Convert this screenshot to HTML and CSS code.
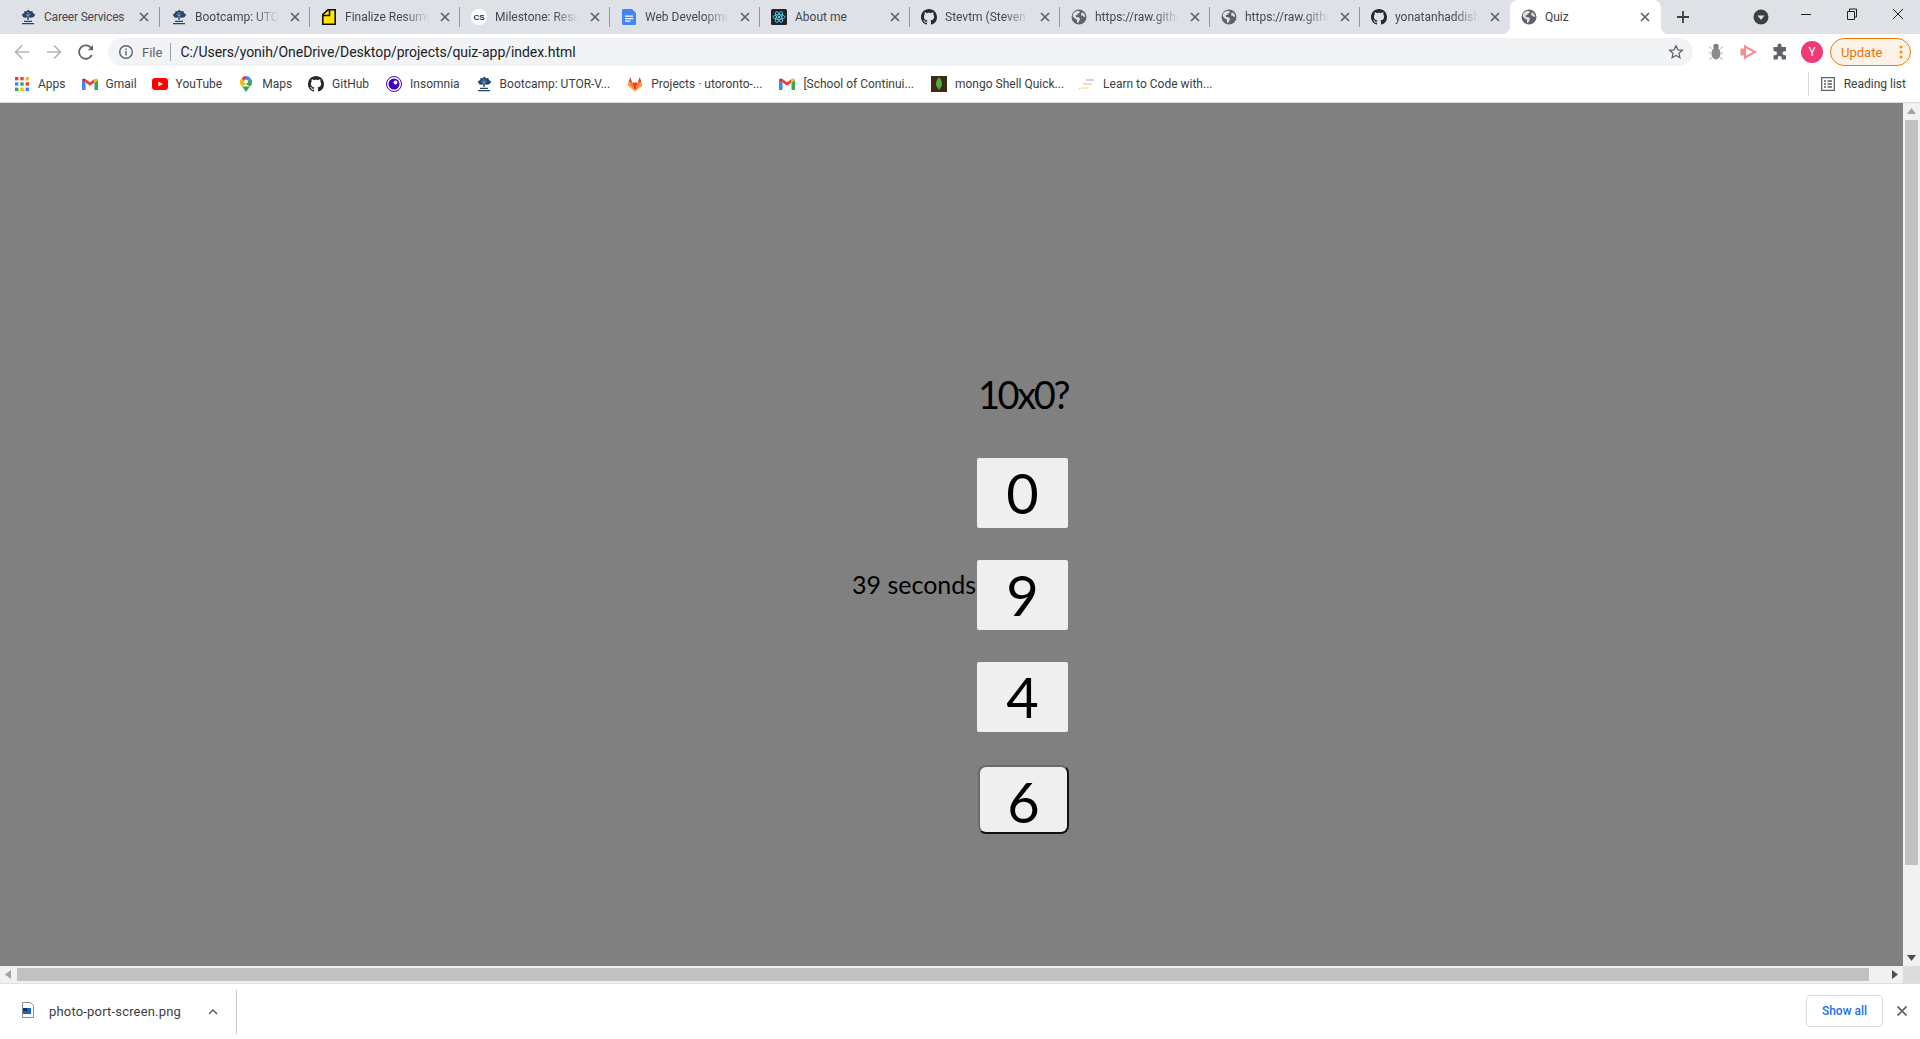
FILE: index.html
```html
<!DOCTYPE html>
<html lang="en">
<head>
<meta charset="utf-8">
<title>Quiz</title>
<link rel="stylesheet" href="styles.css">
</head>
<body>
<svg class="defs" width="0" height="0" aria-hidden="true">
  <symbol id="i-tree" viewBox="0 0 16 16"><path fill="#24466f" d="M8 .5l2.200 1.700 2.200-.2.500 2 2.300 1.500-1 2-1.800 1.100-2.400.1-1.200-.7v2.700h-1.600V8l-1.200.7-2.400-.1L2.800 7.500l-1-2L4.100 4l.5-2 2.200.2z"/><path fill="#24466f" d="M4 11.800h8V13H4zM2 14h12v1.300H2z"/><path fill="none" stroke="#a9b9cc" stroke-width=".7" d="M8 3v5M5.500 5L8 7l2.500-2"/></symbol>
  <symbol id="i-github" viewBox="0 0 16 16"><path fill="#24292e" d="M8 0C3.580 0 0 3.580 0 8c0 3.540 2.290 6.530 5.470 7.590.4.070.55-.17.55-.38 0-.19-.01-.82-.01-1.490-2.010.37-2.530-.49-2.690-.94-.09-.23-.48-.94-.82-1.130-.28-.15-.68-.52-.01-.53.63-.01 1.080.58 1.230.82.72 1.210 1.870.87 2.330.66.07-.52.28-.87.51-1.070-1.780-.2-3.640-.89-3.640-3.950 0-.87.31-1.590.82-2.150-.08-.2-.36-1.020.08-2.120 0 0 .67-.21 2.200.82.64-.18 1.320-.27 2-.27.68 0 1.360.09 2 .27 1.530-1.040 2.200-.82 2.200-.82.44 1.100.16 1.920.08 2.120.51.56.82 1.270.82 2.150 0 3.070-1.870 3.750-3.650 3.950.29.25.54.73.54 1.480 0 1.070-.01 1.930-.01 2.200 0 .21.15.46.55.38A8.013 8.013 0 0016 8c0-4.420-3.580-8-8-8z"/></symbol>
  <symbol id="i-globe" viewBox="0 0 16 16"><circle cx="8" cy="8" r="7.500" fill="#5f6368"/><path fill="#dee1e6" d="M3 3.500l3.200-1.700L9 2.600 8.200 4.300 6.800 4.600 6.400 6 4.600 6.300 5 8l2.700.2 1.300 1.500-.6 2-1.500 2.300-.8-.2-.2-3L3.800 9.400 1.700 7.300 2 5zM11 3.300l2.300 1.700 1 2.500-1.300.6-1.200-1.300-1.400-.2-.4-1.500z"/></symbol>
  <symbol id="i-x" viewBox="0 0 10 10"><path fill="none" stroke="#5f6368" stroke-width="1.700" d="M1 1l8 8M9 1L1 9"/></symbol>
  <symbol id="i-gmail" viewBox="0 0 16 12"><path fill="#4285f4" d="M0 12V2l3.500 2.500V12z"/><path fill="#34a853" d="M12.500 12V4.500L16 2v10z"/><path fill="#ea4335" d="M3.500 4.500V1L8 4.300 12.500 1v3.500L8 7.700z"/><path fill="#c5221f" d="M0 2l1-1.500L3.500 1v3.500z"/><path fill="#fbbc04" d="M16 2L15 .5 12.500 1v3.500z"/></symbol>
</svg>

<header class="tabstrip">
  <div class="tab tab-first"><svg class="favicon"><use href="#i-tree"/></svg><span class="tab-title">Career Services</span><svg class="tab-x"><use href="#i-x"/></svg></div>
  <i class="tab-sep"></i>
  <div class="tab"><svg class="favicon"><use href="#i-tree"/></svg><span class="tab-title fade">Bootcamp: UTOR-V</span><svg class="tab-x"><use href="#i-x"/></svg></div>
  <i class="tab-sep"></i>
  <div class="tab"><svg class="favicon" viewBox="0 0 16 16"><path fill="#ffe600" stroke="#111" stroke-width="1.600" d="M1.800 15.200V5.500L7 .8h7.200v14.400z"/><path fill="none" stroke="#111" stroke-width="1.600" d="M8.500 1v5.500H2"/></svg><span class="tab-title fade">Finalize Resume</span><svg class="tab-x"><use href="#i-x"/></svg></div>
  <i class="tab-sep"></i>
  <div class="tab"><svg class="favicon" viewBox="0 0 16 16"><circle cx="8" cy="8" r="8" fill="#fff"/><text x="8" y="11.300" text-anchor="middle" class="cs-text">CS</text></svg><span class="tab-title fade">Milestone: Resume</span><svg class="tab-x"><use href="#i-x"/></svg></div>
  <i class="tab-sep"></i>
  <div class="tab"><svg class="favicon" viewBox="0 0 16 16"><path fill="#4285f4" d="M2 0h9l4 4v10.500a1.500 1.500 0 01-1.500 1.500h-11A1.500 1.500 0 011 14.500v-13A1.500 1.500 0 012 0z"/><path fill="#fff" d="M4 6.500h8v1.300H4zM4 9h8v1.300H4zM4 11.500h5.500v1.300H4z"/></svg><span class="tab-title fade">Web Development</span><svg class="tab-x"><use href="#i-x"/></svg></div>
  <i class="tab-sep"></i>
  <div class="tab"><svg class="favicon" viewBox="0 0 16 16"><rect width="16" height="16" rx="1.500" fill="#20232a"/><g fill="none" stroke="#61dafb" stroke-width=".8"><ellipse cx="8" cy="8" rx="6" ry="2.400"/><ellipse cx="8" cy="8" rx="6" ry="2.400" transform="rotate(60 8 8)"/><ellipse cx="8" cy="8" rx="6" ry="2.400" transform="rotate(120 8 8)"/></g><circle cx="8" cy="8" r="1.200" fill="#61dafb"/></svg><span class="tab-title">About me</span><svg class="tab-x"><use href="#i-x"/></svg></div>
  <i class="tab-sep"></i>
  <div class="tab"><svg class="favicon"><use href="#i-github"/></svg><span class="tab-title fade">Stevtm (Steven Mai)</span><svg class="tab-x"><use href="#i-x"/></svg></div>
  <i class="tab-sep"></i>
  <div class="tab"><svg class="favicon"><use href="#i-globe"/></svg><span class="tab-title fade">https://raw.githubuser</span><svg class="tab-x"><use href="#i-x"/></svg></div>
  <i class="tab-sep"></i>
  <div class="tab"><svg class="favicon"><use href="#i-globe"/></svg><span class="tab-title fade">https://raw.githubuser</span><svg class="tab-x"><use href="#i-x"/></svg></div>
  <i class="tab-sep"></i>
  <div class="tab"><svg class="favicon"><use href="#i-github"/></svg><span class="tab-title fade">yonatanhaddish/quiz</span><svg class="tab-x"><use href="#i-x"/></svg></div>
  <i class="tab-gap"></i>
  <div class="tab tab-active"><svg class="favicon"><use href="#i-globe"/></svg><span class="tab-title">Quiz</span><svg class="tab-x"><use href="#i-x"/></svg></div>
  <svg class="new-tab" viewBox="0 0 12 12"><path fill="none" stroke="#3c4043" stroke-width="1.800" d="M6 0v12M0 6h12"/></svg>
  <svg class="tab-search" viewBox="0 0 16 16"><circle cx="8" cy="8" r="7.500" fill="#3c4043"/><path fill="#dee1e6" d="M4.500 6.500h7L8 11z"/></svg>
  <div class="win-controls">
    <svg class="win-btn" viewBox="0 0 46 30"><path stroke="#222" d="M18 14.500h10"/></svg>
    <svg class="win-btn" viewBox="0 0 46 30"><path fill="none" stroke="#222" d="M18.500 11.500h7v8h-7zM20.500 11.500v-2.500h7v8h-2"/></svg>
    <svg class="win-btn" viewBox="0 0 46 30"><path stroke="#222" d="M18 9l10 10M28 9L18 19"/></svg>
  </div>
</header>

<nav class="toolbar">
  <svg class="tool" viewBox="0 0 32 32"><path fill="none" stroke="#b4b6b9" stroke-width="1.700" d="M23 16H10M16 9.500L9.500 16l6.500 6.500"/></svg>
  <svg class="tool" viewBox="0 0 32 32"><path fill="none" stroke="#b4b6b9" stroke-width="1.700" d="M9 16h13M16 9.500l6.500 6.500-6.500 6.500"/></svg>
  <svg class="tool" viewBox="0 0 32 32"><path fill="none" stroke="#5f6368" stroke-width="1.800" d="M21.800 19a6.700 6.700 0 11-.2-6.300"/><path fill="#5f6368" d="M23 9v5.200h-5.200z"/></svg>
  <div class="omnibox">
    <svg class="omni-info" viewBox="0 0 16 16"><circle cx="8" cy="8" r="6.300" fill="none" stroke="#5f6368" stroke-width="1.400"/><path fill="#5f6368" d="M7.300 7h1.400v4.500H7.300zM7.300 4.500h1.400v1.400H7.300z"/></svg>
    <span class="omni-file">File</span>
    <i class="omni-sep"></i>
    <span class="omni-url">C:/Users/yonih/OneDrive/Desktop/projects/quiz-app/index.html</span>
    <svg class="omni-star" viewBox="0 0 16 16"><path fill="none" stroke="#5f6368" stroke-width="1.300" d="M8 1.800l1.900 4 4.400.5-3.300 3 .9 4.400L8 11.500l-3.900 2.200.9-4.400-3.300-3 4.400-.5z"/></svg>
  </div>
  <svg class="tool" viewBox="0 0 32 32"><ellipse cx="16" cy="17.500" rx="4.500" ry="6" fill="#8a8d90"/><circle cx="16" cy="10.500" r="2.700" fill="#7b7e82"/><path fill="none" stroke="#b8babd" stroke-width="1.200" d="M11.500 12.500l-2-1.500M20.500 12.500l2-1.500M11 17H8.500M21 17h2.500M11.500 21.500l-2 2M20.500 21.500l2 2"/></svg>
  <svg class="tool" viewBox="0 0 32 32"><path fill="#fb8c8c" d="M8.500 12.500h4.500v7H8.500z"/><path fill="none" stroke="#fb8c8c" stroke-width="2" d="M13 10.500v11L23 16z"/></svg>
  <svg class="tool" viewBox="0 0 32 32"><path fill="#5f6368" d="M13.500 9.500a2 2 0 014 0V11h4.500v4.300h-1.500a2 2 0 000 4H22V23.500h-4.300V22a2 2 0 00-4 0v1.500H9.500v-4.300H11a2 2 0 000-4H9.500V11h4z"/></svg>
  <div class="avatar-box"><span class="avatar">Y</span></div>
  <div class="update"><span class="update-text">Update</span><svg class="update-dots" viewBox="0 0 4 16"><circle cx="2" cy="3" r="1.500"/><circle cx="2" cy="8" r="1.500"/><circle cx="2" cy="13" r="1.500"/></svg></div>
</nav>

<nav class="bookmarks">
  <a class="bm bm-apps"><svg class="favicon" viewBox="0 0 16 16"><g><rect x="1" y="1" width="3.400" height="3.400" fill="#ea4335"/><rect x="6.300" y="1" width="3.400" height="3.400" fill="#ea4335"/><rect x="11.600" y="1" width="3.400" height="3.400" fill="#fbbc04"/><rect x="1" y="6.300" width="3.400" height="3.400" fill="#4285f4"/><rect x="6.300" y="6.300" width="3.400" height="3.400" fill="#34a853"/><rect x="11.600" y="6.300" width="3.400" height="3.400" fill="#ea4335"/><rect x="1" y="11.600" width="3.400" height="3.400" fill="#34a853"/><rect x="6.300" y="11.600" width="3.400" height="3.400" fill="#fbbc04"/><rect x="11.600" y="11.600" width="3.400" height="3.400" fill="#4285f4"/></g></svg><span>Apps</span></a>
  <a class="bm bm-gmail"><svg class="favicon"><use href="#i-gmail"/></svg><span>Gmail</span></a>
  <a class="bm bm-yt"><svg class="favicon" viewBox="0 0 16 16"><rect y="2" width="16" height="12" rx="3" fill="#f00"/><path fill="#fff" d="M6.400 5.500L11 8l-4.600 2.500z"/></svg><span>YouTube</span></a>
  <a class="bm bm-maps"><svg class="favicon" viewBox="0 0 16 16"><path fill="#34a853" d="M4 10.500L8 16l4-5.500z"/><path fill="#4285f4" d="M8 0a5.500 5.500 0 014.400 2.200L8 8z"/><path fill="#ea4335" d="M8 0a5.500 5.500 0 00-4.400 2.200L8 8z"/><path fill="#fbbc04" d="M3.600 2.200A5.500 5.500 0 004 10.500L8 8z"/><path fill="#34a853" d="M12.400 2.200A5.500 5.500 0 0112 10.500L8 8z"/><circle cx="8" cy="5.500" r="2" fill="#fff"/></svg><span>Maps</span></a>
  <a class="bm bm-gh"><svg class="favicon"><use href="#i-github"/></svg><span>GitHub</span></a>
  <a class="bm bm-ins"><svg class="favicon" viewBox="0 0 16 16"><circle cx="8" cy="8" r="7.500" fill="#fff" stroke="#4000bf" stroke-width="1"/><circle cx="8" cy="8" r="5.500" fill="#4000bf"/><circle cx="9.500" cy="6.500" r="2" fill="#fff"/></svg><span>Insomnia</span></a>
  <a class="bm bm-boot"><svg class="favicon"><use href="#i-tree"/></svg><span>Bootcamp: UTOR-V...</span></a>
  <a class="bm bm-gl"><svg class="favicon" viewBox="0 0 16 16"><path fill="#e24329" d="M8 15.500L5.200 6.500h5.600z"/><path fill="#fc6d26" d="M8 15.500L1.500 6.500h3.700zM8 15.500l6.500-9h-3.700z"/><path fill="#fca326" d="M1.500 6.500L.5 9.500l7.500 6zM14.500 6.500l1 3-7.500 6z"/><path fill="#e24329" d="M1.500 6.500L3.300 1l1.900 5.500zM14.500 6.500L12.700 1l-1.900 5.500z"/></svg><span>Projects · utoronto-...</span></a>
  <a class="bm bm-sch"><svg class="favicon"><use href="#i-gmail"/></svg><span>[School of Continui...</span></a>
  <a class="bm bm-mongo"><svg class="favicon" viewBox="0 0 16 16"><rect width="16" height="16" fill="#3b2a17"/><path fill="#4faa41" d="M8 1c2 2.500 3 4.500 3 7 0 2.500-1.500 4-2.500 5L8 15.500 7.500 13C6.500 12 5 10.500 5 8c0-2.500 1-4.500 3-7z"/></svg><span>mongo Shell Quick...</span></a>
  <a class="bm bm-learn"><svg class="favicon" viewBox="0 0 16 16"><path fill="#d9c9f2" d="M7 3h8v2H7z"/><path fill="#f6dcb6" d="M4 7h9v2H4z"/><path fill="#fde5c7" d="M2 11h8v2H2z"/><path fill="#f9c98b" d="M0 12h1.500v1.500H0z"/></svg><span>Learn to Code with...</span></a>
  <div class="bm-reading"><svg class="favicon" viewBox="0 0 16 16"><path fill="none" stroke="#5f6368" stroke-width="1.300" d="M1.700 1.700h12.600v12.600H1.700z"/><path stroke="#5f6368" stroke-width="1.300" d="M4 5h2M7.500 5H12M4 8h2M7.500 8H12M4 11h2M7.500 11H12"/></svg><span>Reading list</span></div>
</nav>

<div class="viewport">
  <main class="page">
    <section class="quiz">
      <h1 class="question">10x0?</h1>
      <button class="answer">0</button>
      <p class="timer">39 seconds</p>
      <button class="answer">9</button>
      <button class="answer">4</button>
      <button class="answer answer-hover">6</button>
    </section>
  </main>
  <aside class="vscroll">
    <svg class="arrow-v" viewBox="0 0 17 17"><path fill="#a3a3a3" d="M8.500 5L13 11H4z"/></svg>
    <div class="vthumb"></div>
    <svg class="arrow-v" viewBox="0 0 17 17"><path fill="#505050" d="M8.500 12L4 6h9z"/></svg>
  </aside>
</div>
<div class="hscroll">
  <svg class="arrow-h" viewBox="0 0 17 17"><path fill="#a3a3a3" d="M5 8.500L11 4v9z"/></svg>
  <div class="hthumb"></div>
  <svg class="arrow-h" viewBox="0 0 17 17"><path fill="#505050" d="M12 8.500L6 13V4z"/></svg>
  <div class="corner"></div>
</div>

<footer class="downloads">
  <div class="dl-item">
    <svg class="dl-icon" viewBox="0 0 16 16"><path fill="#fff" stroke="#8e8e8e" d="M2.500.5h8l3 3v12h-11z"/><rect x="3" y="6" width="8" height="6" fill="#1565c0"/><rect x="3" y="6" width="4" height="3" fill="#0d2f66"/></svg>
    <span class="dl-name">photo-port-screen.png</span>
    <svg class="dl-chevron" viewBox="0 0 10 6"><path fill="none" stroke="#5f6368" stroke-width="1.500" d="M1 5l4-4 4 4"/></svg>
  </div>
  <i class="dl-sep"></i>
  <button class="show-all">Show all</button>
  <svg class="dl-x" viewBox="0 0 10 10"><path fill="none" stroke="#5f6368" stroke-width="1.700" d="M.5.500l9 9M9.500.500l-9 9"/></svg>
</footer>
</body>
</html>
```
FILE: styles.css
```css
* { box-sizing: border-box; }
html, body { margin: 0; height: 100%; }
body {
  height: 1039px;
  display: flex;
  flex-direction: column;
  overflow: hidden;
  background: #fff;
  font-family: Roboto, "Liberation Sans", sans-serif;
  font-size: 12px;
  color: #3c4043;
}
.defs { position: absolute; }
.favicon { width: 16px; height: 16px; flex: none; }

/* tab strip */
.tabstrip {
  height: 34px;
  flex: none;
  display: flex;
  align-items: center;
  padding-left: 10px;
  background: #dee1e6;
}
.tab {
  width: 149px;
  height: 34px;
  flex: none;
  display: flex;
  align-items: center;
  padding-left: 11px;
  position: relative;
}
.tab-first { padding-left: 10px; }
.tab-sep { width: 1px; height: 20px; flex: none; background: #92959a; }
.tab-gap { width: 1px; flex: none; }
.tab-title {
  margin-left: 8px;
  width: 84px;
  flex: none;
  white-space: nowrap;
  overflow: hidden;
  color: #45494e;
}
.tab-first .tab-title { letter-spacing: -.2px; }
.tab-title.fade {
  -webkit-mask-image: linear-gradient(to right, #000 70%, transparent 100%);
  mask-image: linear-gradient(to right, #000 70%, transparent 100%);
}
.tab-x { width: 10px; height: 10px; margin-left: 11px; flex: none; }
.tab-active {
  width: 151px;
  background: #fff;
  border-radius: 8px 8px 0 0;
}
.tab-active .tab-title { color: #3c4043; }
.tab-active::before, .tab-active::after {
  content: "";
  position: absolute;
  bottom: 0;
  width: 8px;
  height: 8px;
}
.tab-active::before { left: -8px; background: radial-gradient(circle at 0 0, transparent 8px, #fff 8.500px); }
.tab-active::after { right: -8px; background: radial-gradient(circle at 100% 0, transparent 8px, #fff 8.500px); }
.cs-text { font: 700 8px "Liberation Sans", sans-serif; fill: #1f2d4d; }
.new-tab { width: 12px; height: 12px; margin-left: 16px; flex: none; }
.tab-search { width: 16px; height: 16px; margin-left: 64px; flex: none; }
.win-controls { display: flex; margin-left: 14px; align-self: flex-start; }
.win-btn { width: 46px; height: 30px; flex: none; }

/* toolbar */
.toolbar {
  height: 32px;
  flex: none;
  display: flex;
  align-items: center;
  padding: 4px 0 0 6px;
  background: #fff;
}
.tool { width: 32px; height: 32px; flex: none; }
.omnibox {
  width: 1585px;
  height: 28px;
  margin: 0 7px 0 6px;
  flex: none;
  display: flex;
  align-items: center;
  padding-left: 10px;
  background: #f1f3f4;
  border-radius: 14px;
}
.omni-info { width: 16px; height: 16px; flex: none; }
.omni-file { margin-left: 8px; font-size: 13px; color: #5f6368; }
.omni-sep { width: 1px; height: 18px; margin-left: 8px; background: #9aa0a6; }
.omni-url { margin-left: 9px; font-size: 14px; letter-spacing: -.05px; color: #202124; white-space: nowrap; }
.omni-star { width: 16px; height: 16px; margin-left: auto; margin-right: 9px; flex: none; }
.avatar-box { width: 28px; height: 32px; display: flex; align-items: center; justify-content: center; flex: none; margin-left: 2px; }
.avatar {
  width: 22px;
  height: 22px;
  border-radius: 50%;
  background: #ee3a77;
  color: #fff;
  font-size: 12px;
  text-align: center;
  line-height: 22px;
}
.update {
  width: 81px;
  height: 28px;
  margin-left: 4px;
  display: flex;
  align-items: center;
  padding-left: 10px;
  border: 1px solid #ef7c00;
  border-radius: 14px;
  background: #fdf2e7;
  color: #e8710a;
  flex: none;
}
.update-text { font-size: 13px; }
.update-dots { width: 4px; height: 16px; margin-left: 17px; fill: #f29900; flex: none; }

/* bookmarks */
.bookmarks {
  height: 37px;
  flex: none;
  display: flex;
  align-items: center;
  padding: 0 14px 1px 14px;
  gap: 16px;
  border-bottom: 1px solid #dadce0;
  background: #fff;
}
.bm { display: flex; align-items: center; gap: 8px; white-space: nowrap; color: #3c4043; flex: none; }
.bm-yt { margin-left: -1px; }
.bm-ins { margin-left: 1px; }
.bm-gl { margin-left: 1px; }
.bm-sch, .bm-mongo { margin-left: 1px; }
.bm-learn { margin-left: -1px; }
.bm-reading {
  margin-left: auto;
  display: flex;
  align-items: center;
  gap: 8px;
  height: 24px;
  padding-left: 11px;
  border-left: 1px solid #dadce0;
}
.bm-reading span { white-space: nowrap; }

/* page */
.viewport { flex: 1; min-height: 0; display: flex; }
.page { flex: 1; background: #808080; padding: 267px 0 0 852px; }
.quiz {
  display: grid;
  grid-template-columns: 125px 91px;
  row-gap: 32px;
  font-family: Lato, "Open Sans", sans-serif;
  color: #000;
}
.question {
  grid-column: 2;
  justify-self: end;
  margin: 0;
  height: 56px;
  font-size: 38px;
  font-weight: 400;
  line-height: 48px;
  letter-spacing: -2.400px;
  white-space: nowrap;
}
.answer {
  grid-column: 2;
  width: 91px;
  height: 70px;
  padding: 0;
  border: 0;
  border-radius: 2px;
  background: #efefef;
  color: #000;
  font-family: inherit;
  font-size: 56px;
  line-height: 70px;
}
.timer {
  grid-column: 1;
  align-self: start;
  margin: 0;
  font-size: 25px;
  white-space: nowrap;
  line-height: 48px;
}
.answer-hover {
  height: 69px;
  margin: 1px 0 0 1px;
  border-radius: 8px;
  border: 2px solid;
  border-color: #6a6a6a #111 #111 #6a6a6a;
}

/* scrollbars */
.vscroll { width: 17px; flex: none; display: flex; flex-direction: column; background: #f1f1f1; }
.arrow-v, .arrow-h { width: 17px; height: 17px; flex: none; }
.vthumb { width: 13px; height: 745px; margin: 0 2px auto; background: #c1c1c1; }
.hscroll { height: 17px; flex: none; display: flex; background: #f1f1f1; }
.hthumb { width: 1852px; height: 13px; margin: 2px 17px 0 0; background: #c1c1c1; flex: none; }
.corner { width: 17px; flex: none; background: #dcdcdc; }

/* download bar */
.downloads {
  height: 56px;
  flex: none;
  display: flex;
  align-items: center;
  border-top: 1px solid #e0e0e0;
  background: #fff;
}
.dl-item { display: flex; align-items: center; padding-left: 20px; flex: none; }
.dl-icon { width: 16px; height: 16px; flex: none; margin-top: -3px; }
.dl-name { margin-left: 13px; font-size: 13px; letter-spacing: .18px; color: #3c4043; white-space: nowrap; }
.dl-chevron { width: 10px; height: 6px; margin-left: 27px; flex: none; }
.dl-sep { width: 1px; height: 44px; margin-left: 18px; background: #c8c8c8; }
.show-all {
  margin-left: auto;
  width: 77px;
  height: 32px;
  margin-top: -2px;
  border: 1px solid #dadce0;
  border-radius: 4px;
  background: #fff;
  color: #1a73e8;
  font: 500 12px Roboto, sans-serif;
}
.dl-x { width: 10px; height: 10px; margin: -2px 13px 0 14px; flex: none; }
```
